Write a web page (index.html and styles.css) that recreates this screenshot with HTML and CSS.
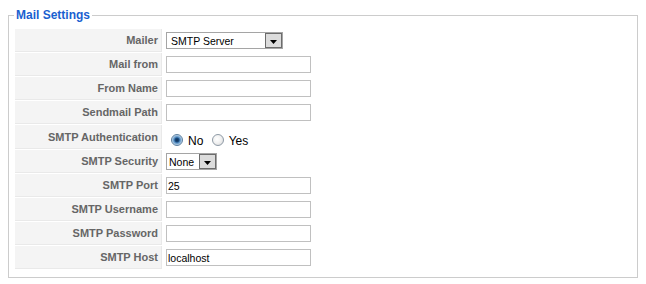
FILE: index.html
```html
<!DOCTYPE html>
<html>
  <head>
    <meta charset="utf-8">
    <link rel="stylesheet" href="styles.css">
  </head>
  <body>
    <fieldset class="adminform">
      <legend>Mail Settings</legend>
      <table class="admintable" cellspacing="1">
        <tr>
          <td class="key">Mailer</td>
          <td>
            <span class="dropdown dropdown--mailer">
              <select>
                <option>SMTP Server</option>
                <option>PHP Mail Function</option>
                <option>Sendmail</option>
              </select>
              <span class="dropdown__btn"><svg width="7" height="4" viewBox="0 0 7 4"><path d="M0 0h7L3.5 4z" fill="#000"/></svg></span>
            </span>
          </td>
        </tr>
        <tr>
          <td class="key">Mail from</td>
          <td><input type="text" class="text_area" value=""></td>
        </tr>
        <tr>
          <td class="key">From Name</td>
          <td><input type="text" class="text_area" value=""></td>
        </tr>
        <tr>
          <td class="key">Sendmail Path</td>
          <td><input type="text" class="text_area" value=""></td>
        </tr>
        <tr>
          <td class="key">SMTP Authentication</td>
          <td class="radios">
            <input type="radio" name="smtpauth" id="smtpauth0" checked><label for="smtpauth0">No</label>
            <input type="radio" name="smtpauth" id="smtpauth1"><label for="smtpauth1">Yes</label>
          </td>
        </tr>
        <tr>
          <td class="key">SMTP Security</td>
          <td>
            <span class="dropdown dropdown--security">
              <select>
                <option>None</option>
                <option>SSL</option>
                <option>TLS</option>
              </select>
              <span class="dropdown__btn"><svg width="7" height="4" viewBox="0 0 7 4"><path d="M0 0h7L3.5 4z" fill="#000"/></svg></span>
            </span>
          </td>
        </tr>
        <tr>
          <td class="key">SMTP Port</td>
          <td><input type="text" class="text_area" value="25"></td>
        </tr>
        <tr>
          <td class="key">SMTP Username</td>
          <td><input type="text" class="text_area" value=""></td>
        </tr>
        <tr>
          <td class="key">SMTP Password</td>
          <td><input type="password" class="text_area" value=""></td>
        </tr>
        <tr>
          <td class="key">SMTP Host</td>
          <td><input type="text" class="text_area" value="localhost"></td>
        </tr>
      </table>
    </fieldset>
  </body>
</html>
```

FILE: styles.css
```css
* {
  box-sizing: border-box;
}
body {
  margin: 8px;
  font-family: Arial, "Liberation Sans", Helvetica, sans-serif;
  font-size: 11px;
  color: #333;
  background: #fff;
}

fieldset.adminform {
  margin: 0;
  padding: 6px 5px 7px 5px;
  border: 1px solid #ccc;
}
fieldset.adminform legend {
  padding: 0 2px;
  color: #1a5fd0;
  font-size: 12px;
  font-weight: bold;
}

table.admintable {
  border-collapse: separate;
  border-spacing: 1px;
}
table.admintable td {
  padding: 3px;
  height: 23px;
  vertical-align: middle;
}
table.admintable td.key {
  width: 147px;
  background-color: #f4f4f4;
  text-align: right;
  color: #666;
  font-weight: bold;
  border-bottom: 1px solid #e9e9e9;
  border-right: 1px solid #e9e9e9;
}

input.text_area {
  display: block;
  width: 145px;
  height: 17px;
  margin: 0;
  padding: 0 1px;
  border: 1px solid #c0c0c0;
  font-family: Arial, "Liberation Sans", sans-serif;
  font-size: 10.5px;
  color: #000;
  outline: none;
}

.dropdown {
  position: relative;
  display: block;
  height: 17px;
  border: 1px solid #a5a5a5;
  background: #fff;
}
.dropdown--mailer {
  width: 117px;
}
.dropdown--security {
  width: 51px;
}
.dropdown select {
  appearance: none;
  -webkit-appearance: none;
  width: 100%;
  height: 15px;
  margin: 0;
  padding: 0 0 0 4px;
  border: none;
  background: transparent;
  font-family: Arial, "Liberation Sans", sans-serif;
  font-size: 10.5px;
  color: #000;
  outline: none;
}
.dropdown--security select {
  padding-left: 2px;
}
/* fake windows-classic arrow button sitting over the select */
.dropdown__btn {
  position: absolute;
  top: 0;
  right: 0;
  width: 17px;
  height: 15px;
  border: 1px solid #6c6c6c;
  background: #dcdcdc;
  display: flex;
  align-items: flex-end;
  justify-content: center;
  padding-bottom: 3px;
  pointer-events: none;
}
.dropdown__btn svg {
  display: block;
}

table.admintable td.radios {
  height: 24px;
  padding: 4px 3px 0 3px;
  font-size: 12px;
  line-height: 14px;
  color: #000;
}
td.radios input[type="radio"] {
  appearance: none;
  -webkit-appearance: none;
  width: 12px;
  height: 12px;
  margin: 3px 5px 0 5px;
  border: 1px solid #8e9aa6;
  border-radius: 50%;
  background: radial-gradient(circle at 40% 40%, #fff 0, #f2f2f2 45%, #d6d6d6 100%);
  vertical-align: -1px;
}
td.radios input[type="radio"]:checked {
  border-color: #5b7e9e;
  background: radial-gradient(circle, #0c2f55 0, #1b4a7c 28%, #4b86bd 40%, #cfe2f2 75%, #e8f1f8 100%);
}
```
